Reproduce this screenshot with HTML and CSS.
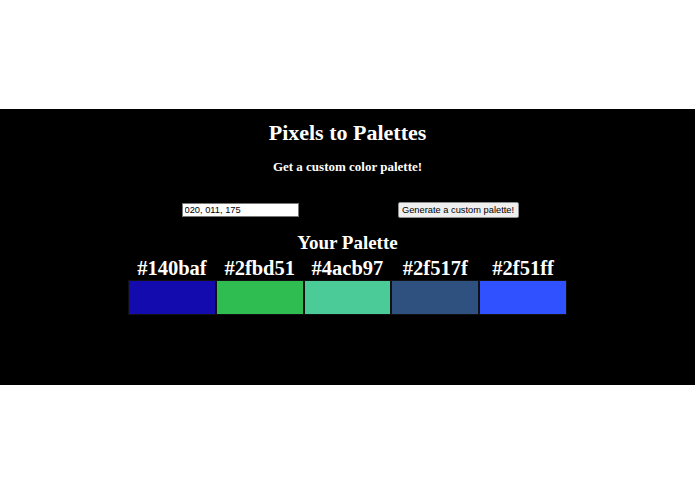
FILE: index.html
```html
<!DOCTYPE html>
<html lang="en">

<head>
    <meta charset="UTF-8">
    <meta name="viewport" content="width=device-width, initial-scale=1.0">
    <title>Pixels to Palettes</title>
    <link rel="stylesheet" href="styles.css">
</head>

<body>
    <div class="app">
        <h1>Pixels to Palettes</h1>
        <h3>Get a custom color palette!</h3>

        <div class="controls">
            <div class="cell">
                <input type="text" value="020, 011, 175">
            </div>
            <div class="cell">
                <button class="generate">Generate a custom palette!</button>
            </div>
        </div>

        <h2>Your Palette</h2>
        <div class="palette">
            <div class="color">
                <span>#140baf</span>
                <div class="swatch" style="background-color: #140baf"></div>
            </div>
            <div class="color">
                <span>#2fbd51</span>
                <div class="swatch" style="background-color: #2fbd51"></div>
            </div>
            <div class="color">
                <span>#4acb97</span>
                <div class="swatch" style="background-color: #4acb97"></div>
            </div>
            <div class="color">
                <span>#2f517f</span>
                <div class="swatch" style="background-color: #2f517f"></div>
            </div>
            <div class="color">
                <span>#2f51ff</span>
                <div class="swatch" style="background-color: #2f51ff"></div>
            </div>
        </div>
    </div>
</body>

</html>
```

FILE: styles.css
```css
* {
    margin: 0;
    padding: 0;
    box-sizing: border-box;
}

body {
    display: flex;
    align-items: center;
    min-height: 100vh;
    background-color: #fff;
    font-family: "Liberation Serif", "Times New Roman", serif;
}

.app {
    width: 100%;
    height: 276px;
    padding-top: 11px;
    display: flex;
    flex-direction: column;
    align-items: center;
    background-color: #000;
    color: #fff;
}

h1 {
    font-size: 22px;
    line-height: 26px;
}

h3 {
    margin-top: 13px;
    font-size: 13px;
    line-height: 16px;
}

.controls {
    display: grid;
    grid-template-columns: 1fr 1fr;
    width: 439px;
    margin-top: 27px;
    padding-left: 3px;
    align-items: center;
}

.cell {
    display: flex;
    justify-content: center;
}

input {
    width: 117px;
    height: 14px;
    padding: 0 2px;
    border: 1px solid #767676;
    font-family: "Liberation Sans", Arial, sans-serif;
    font-size: 9.3px;
    color: #000;
    background-color: #fff;
}

.generate {
    width: 121px;
    height: 16px;
    border: 1px solid #8f8f8f;
    border-radius: 2px;
    background-color: #efefef;
    font-family: "Liberation Sans", Arial, sans-serif;
    font-size: 9.3px;
    color: #000;
}

h2 {
    margin-top: 14px;
    font-size: 19px;
    line-height: 22px;
}

.palette {
    display: flex;
    width: 439px;
    margin-top: 3px;
}

.color {
    flex: 1;
    display: flex;
    flex-direction: column;
    align-items: center;
}

.color span {
    font-size: 20.5px;
    font-weight: bold;
    line-height: 22px;
    white-space: nowrap;
}

.swatch {
    width: 100%;
    height: 35px;
    margin-top: 1px;
    border: 1px solid #111;
}
```
